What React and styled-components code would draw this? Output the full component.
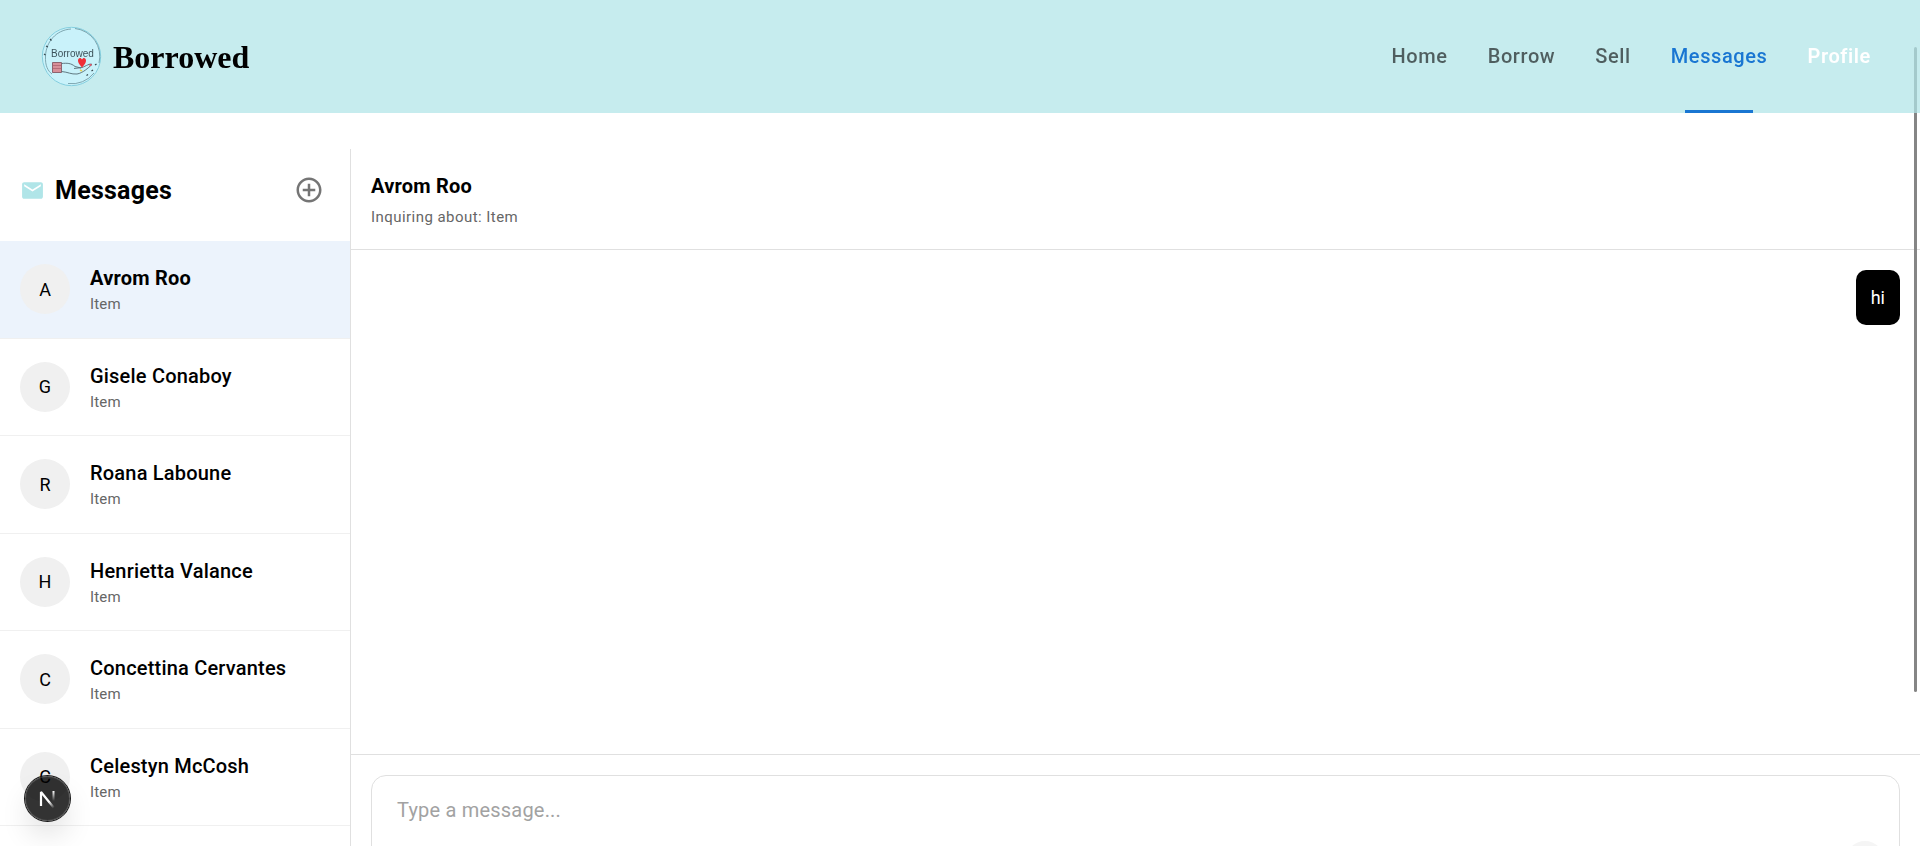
import React, { useState } from 'react'
import styled, { createGlobalStyle } from 'styled-components'
import { MdAddCircleOutline, MdEmail, MdSend } from 'react-icons/md'

const GlobalStyle = createGlobalStyle`
  * {
    box-sizing: border-box;
  }

  html {
    scrollbar-width: none;
  }

  body {
    margin: 0;
    background: #fff;
    color: #000;
    font-family: Roboto, "Liberation Sans", sans-serif;
    font-size: 20px;
    line-height: 1.5;
  }

  button, textarea {
    font: inherit;
    border: 0;
    background: none;
    padding: 0;
  }

  h1, h2, p, ul {
    margin: 0;
    padding: 0;
    list-style: none;
  }
`;

const Page = styled.div`
  padding-top: 149px;
  height: 100vh;
  overflow: hidden;
`;

const Header = styled.header`
  position: fixed;
  inset: 0 0 auto;
  z-index: 10;
  display: flex;
  align-items: center;
  justify-content: space-between;
  height: 113px;
  padding: 0 29px 0 40px;
  background: rgba(176, 229, 232, 0.72);
`;

const Brand = styled.a`
  display: flex;
  align-items: center;
  gap: 10px;
  color: #000;
  text-decoration: none;
  font-family: "Liberation Serif", serif;
  font-size: 32px;
  font-weight: 700;
`;

const Nav = styled.nav`
  display: flex;
  align-self: stretch;
`;

const NavLink = styled.a`
  display: flex;
  flex-direction: column;
  justify-content: center;
  align-items: center;
  position: relative;
  padding: 0 20px 2px;
  color: ${props => props.$color || "rgba(0, 0, 0, 0.6)"};
  font-weight: ${props => props.$bold ? 600 : 500};
  letter-spacing: 0.03em;
  text-decoration: none;

  &[aria-current]::after {
    content: "";
    position: absolute;
    bottom: 0;
    width: 50%;
    height: 3px;
    background: #1976d2;
  }
`;

const ScrollThumb = styled.div`
  position: fixed;
  top: 47px;
  right: 3px;
  width: 3px;
  height: calc(100vh - 201px);
  background: #858585;
  border-radius: 2px;
`;

const Layout = styled.main`
  display: flex;
  height: calc(100vh - 80px);
`;

const Sidebar = styled.aside`
  flex: 0 0 351px;
  border-right: 1px solid #e0e0e0;
  overflow: hidden;
`;

const SidebarHeader = styled.div`
  display: flex;
  align-items: center;
  gap: 10px;
  height: 92px;
  padding: 0 26px 10px 20px;
`;

const SidebarTitle = styled.h1`
  flex: 1;
  padding-top: 2px;
  font-size: 25px;
  font-weight: 700;
  letter-spacing: 0.01em;
`;

const IconButton = styled.button`
  display: flex;
  color: #757575;
  cursor: pointer;
`;

const Row = styled.button`
  display: flex;
  align-items: center;
  gap: 20px;
  width: 100%;
  padding: 22px 20px;
  border-bottom: 1px solid #f0f0f0;
  background: ${props => props.$active ? "#ecf3fc" : "#fff"};
  color: #000;
  text-align: left;
  cursor: pointer;
`;

const Avatar = styled.span`
  display: flex;
  align-items: center;
  justify-content: center;
  flex: none;
  width: 50px;
  height: 50px;
  border-radius: 50%;
  background: #f0f0f0;
  font-size: 18px;
`;

const Name = styled.span`
  display: block;
  font-weight: ${props => props.$bold ? 700 : 500};
  letter-spacing: 0.01em;
`;

const Item = styled.span`
  display: block;
  color: #666;
  font-size: 15px;
  letter-spacing: 0.01em;
`;

const Chat = styled.section`
  display: flex;
  flex: 1;
  flex-direction: column;
  min-width: 0;
`;

const ChatHeader = styled.div`
  display: flex;
  flex-direction: column;
  gap: 5px;
  padding: 22px 20px 20px;
  border-bottom: 1px solid #e0e0e0;
`;

const ChatName = styled.h2`
  font-size: 20px;
  font-weight: 700;
  letter-spacing: 0.01em;
`;

const ChatTopic = styled.p`
  color: #666;
  font-size: 15px;
  line-height: 23px;
  letter-spacing: 0.03em;
`;

const MessageList = styled.div`
  display: flex;
  flex: 1;
  flex-direction: column;
  align-items: flex-end;
  padding: 20px;
`;

const Bubble = styled.p`
  padding: 14px 15px;
  border-radius: 10px;
  background: #000;
  color: #fff;
  font-size: 18px;
`;

const Composer = styled.form`
  padding: 20px;
  border-top: 1px solid #e0e0e0;
`;

const InputBox = styled.div`
  display: flex;
  align-items: flex-end;
  height: 120px;
  padding: 15px;
  border: 1px solid #e0e0e0;
  border-radius: 15px;
`;

const MessageInput = styled.textarea`
  flex: 1;
  height: 100%;
  padding: 4px 10px;
  outline: none;
  resize: none;
  letter-spacing: 0.01em;

  &::placeholder {
    color: #a2a2a2;
  }
`;

const SendButton = styled.button`
  display: flex;
  align-items: center;
  justify-content: center;
  width: 38px;
  height: 38px;
  border-radius: 50%;
  background: #f5f5f5;
  color: #bdbdbd;
`;

const DevBadge = styled.button`
  position: fixed;
  left: 25px;
  bottom: 25px;
  z-index: 20;
  width: 45px;
  height: 45px;
  border-radius: 50%;
  background: rgba(0, 0, 0, 0.8);
  box-shadow: 0 0 0 1px #171717, inset 0 0 0 1px rgba(255, 255, 255, 0.14),
    0 16px 32px -8px rgba(0, 0, 0, 0.24);

  svg {
    display: block;
  }
`;

const links = [
  { label: "Home" },
  { label: "Borrow" },
  { label: "Sell" },
  { label: "Messages", color: "#1976d2", current: true },
  { label: "Profile", color: "#fff", bold: true },
];

const people = [
  "Avrom Roo",
  "Gisele Conaboy",
  "Roana Laboune",
  "Henrietta Valance",
  "Concettina Cervantes",
  "Celestyn McCosh",
];

function Logo() {
  return (
    <svg width="63" height="63" viewBox="0 0 63 63" fill="none" aria-hidden="true">
      <circle cx="31.5" cy="31.5" r="29.2" fill="#c9f2fa" stroke="#84cede" strokeWidth="1" />
      <path d="M35 3.500A28 28 0 0 1 59 38M28 58.500A28 28 0 0 0 54 48" stroke="#5f8791" strokeWidth=".7" />
      <path d="M31 4C16 5 6 17 5.500 31C5 41 8 46 12 49" stroke="#5f8791" strokeWidth=".7" />
      <path d="M10 14l1.500 1.500M6 21l2 1M4 29l1.500 1M56.500 39l-1.500 1M53 45l-1.500 1M48 49.500l-1.500 1" stroke="#34474e" strokeWidth="1.200" />
      <text x="11" y="31.500" fontSize="10" fontWeight="400" fontFamily="Liberation Sans, sans-serif" fill="#3d525a">Borrowed</text>
      <path d="M12.500 37.500h9v10h-9z" fill="#d78f98" stroke="#7b4d58" strokeWidth=".8" />
      <path d="M12.500 40.500h9M12.500 43.500h9" stroke="#a85f6c" strokeWidth=".7" />
      <path d="M21.500 38.500C27 38 31 38 35 41.500L41 43M21.500 46.500C28 47 31 49.500 37 49C43 48 48 43 52 39.500C50 38 46 41 42 42.500L34 43.500" stroke="#536b73" strokeWidth=".9" />
      <path d="M42 42.500C39 39 38 37.500 38 35.500C38 32.500 41 32 42 34.500C43 32 46 32.500 46 35.500C46 37.500 45 39 42 42.500z" fill="#ef2f38" />
      <path d="M40 45l2 1" stroke="#e5cf52" strokeWidth="1.500" />
      <path d="M49.500 40.500l2-1" stroke="#eb4b62" strokeWidth="1.500" />
    </svg>
  )
}

function NextMark() {
  return (
    <svg width="45" height="45" viewBox="0 0 45 45" fill="none" aria-hidden="true">
      <defs>
        <linearGradient id="stem" x1="29" y1="15" x2="29" y2="25" gradientUnits="userSpaceOnUse">
          <stop stopColor="#fff" />
          <stop offset="1" stopColor="#fff" stopOpacity="0" />
        </linearGradient>
        <linearGradient id="slash" x1="25" y1="25" x2="30" y2="31" gradientUnits="userSpaceOnUse">
          <stop stopColor="#fff" />
          <stop offset="1" stopColor="#fff" stopOpacity="0" />
        </linearGradient>
      </defs>
      <path d="M16 30V16L29 32" stroke="url(#slash)" strokeWidth="2.200" strokeLinejoin="bevel" />
      <path d="M28.500 15v10" stroke="url(#stem)" strokeWidth="2" />
    </svg>
  )
}

export default function App() {
  const [active, setActive] = useState(0);
  const [draft, setDraft] = useState("");

  return (
    <Page>
      <GlobalStyle />
      <ScrollThumb />
      <Header>
        <Brand href="#">
          <Logo />
          Borrowed
        </Brand>
        <Nav>
          {links.map(link => (
            <NavLink
              key={link.label}
              href="#"
              $color={link.color}
              $bold={link.bold}
              aria-current={link.current ? "page" : undefined}
            >
              {link.label}
            </NavLink>
          ))}
        </Nav>
      </Header>
      <Layout>
        <Sidebar>
          <SidebarHeader>
            <MdEmail size={25} color="#b0e5e8" />
            <SidebarTitle>Messages</SidebarTitle>
            <IconButton aria-label="New message">
              <MdAddCircleOutline size={30} />
            </IconButton>
          </SidebarHeader>
          <ul>
            {people.map((name, index) => (
              <li key={name}>
                <Row $active={index === active} onClick={() => setActive(index)}>
                  <Avatar>{name[0]}</Avatar>
                  <span>
                    <Name $bold={index === active}>{name}</Name>
                    <Item>Item</Item>
                  </span>
                </Row>
              </li>
            ))}
          </ul>
        </Sidebar>
        <Chat>
          <ChatHeader>
            <ChatName>{people[active]}</ChatName>
            <ChatTopic>Inquiring about: Item</ChatTopic>
          </ChatHeader>
          <MessageList>
            <Bubble>hi</Bubble>
          </MessageList>
          <Composer onSubmit={e => e.preventDefault()}>
            <InputBox>
              <MessageInput
                aria-label="Message"
                placeholder="Type a message..."
                value={draft}
                onChange={e => setDraft(e.target.value)}
              />
              <SendButton aria-label="Send">
                <MdSend size={20} />
              </SendButton>
            </InputBox>
          </Composer>
        </Chat>
      </Layout>
      <DevBadge aria-label="Open developer tools">
        <NextMark />
      </DevBadge>
    </Page>
  )
}
